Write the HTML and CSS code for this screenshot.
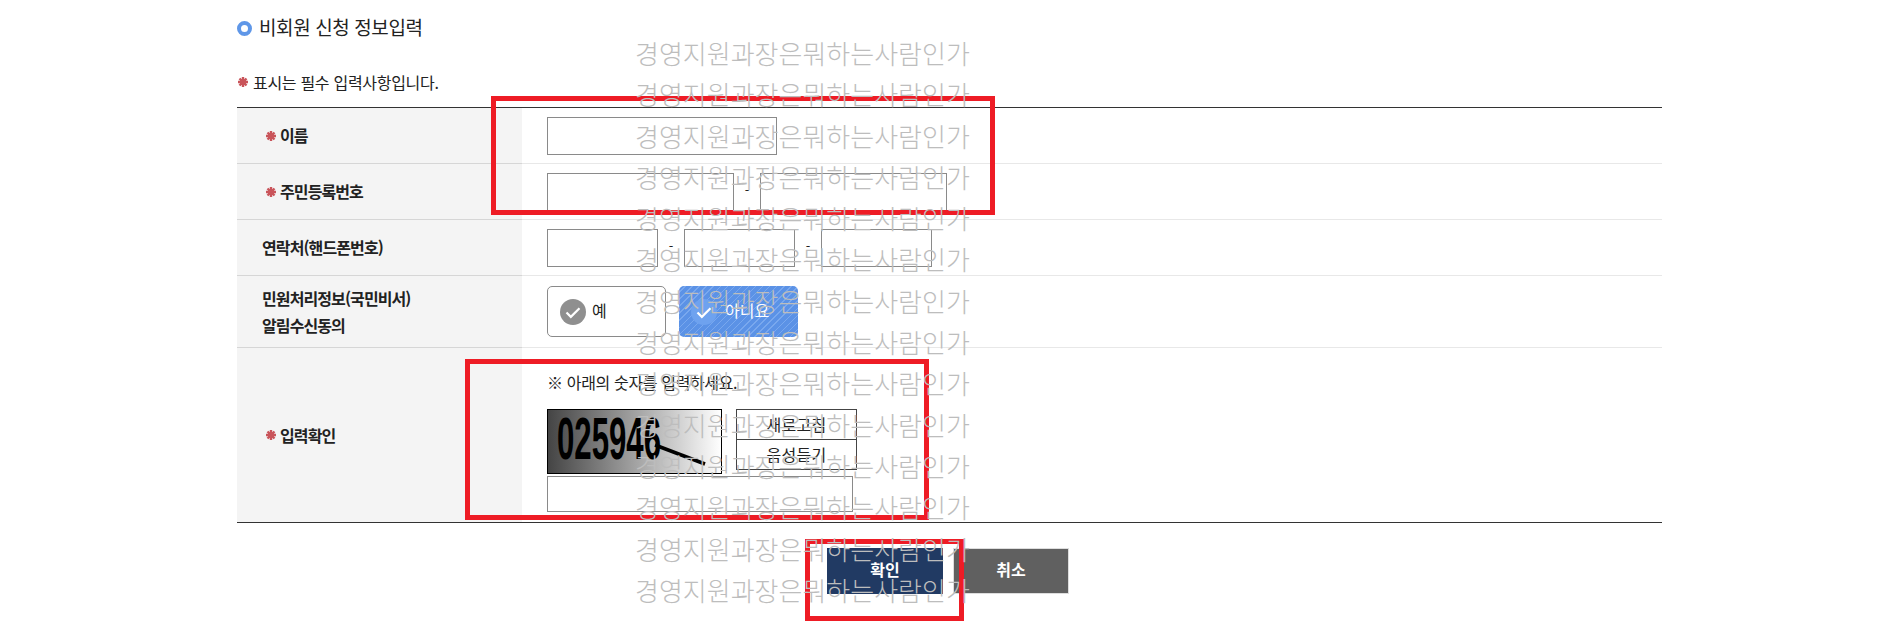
FILE: index.html
```html
<!DOCTYPE html>
<html lang="ko">
<head>
  <meta charset="UTF-8">
  <title>비회원 신청 정보입력</title>
  <link rel="stylesheet" href="styles.css">
</head>
<body>
  <div class="content">
    <h2 class="title"><span class="bullet"></span>비회원 신청 정보입력</h2>
    <p class="note"><svg class="star" viewBox="0 0 10 10"><path d="M5 0v10M0 5h10M1.5 1.5l7 7M8.5 1.5l-7 7"/></svg>표시는 필수 입력사항입니다.</p>

    <table class="form">
      <tr>
        <th><span class="req"><svg class="star" viewBox="0 0 10 10"><path d="M5 0v10M0 5h10M1.5 1.5l7 7M8.5 1.5l-7 7"/></svg>이름</span></th>
        <td><input class="in-name" type="text"></td>
      </tr>
      <tr>
        <th><span class="req"><svg class="star" viewBox="0 0 10 10"><path d="M5 0v10M0 5h10M1.5 1.5l7 7M8.5 1.5l-7 7"/></svg>주민등록번호</span></th>
        <td>
          <div class="fields">
            <input class="in-jumin" type="text"><span class="dash">-</span><input class="in-jumin" type="text">
          </div>
        </td>
      </tr>
      <tr>
        <th>연락처(핸드폰번호)</th>
        <td>
          <div class="fields">
            <input class="in-tel" type="text"><span class="dash">-</span><input class="in-tel" type="text"><span class="dash">-</span><input class="in-tel" type="text">
          </div>
        </td>
      </tr>
      <tr>
        <th>민원처리정보(국민비서)<br>알림수신동의</th>
        <td>
          <div class="choices">
            <div class="choice">
              <span class="tick"><svg viewBox="0 0 24 24"><path d="M6 12.5l4 4 8-8"/></svg></span>예
            </div>
            <div class="choice on">
              <span class="tick"><svg viewBox="0 0 24 24"><path d="M6 12.5l4 4 8-8"/></svg></span>아니요
            </div>
          </div>
        </td>
      </tr>
      <tr>
        <th><span class="req"><svg class="star" viewBox="0 0 10 10"><path d="M5 0v10M0 5h10M1.5 1.5l7 7M8.5 1.5l-7 7"/></svg>입력확인</span></th>
        <td class="captcha-cell">
          <p class="captcha-note">※ 아래의 숫자를 입력하세요.</p>
          <div class="captcha-row">
            <svg class="captcha" viewBox="0 0 175 65">
              <defs>
                <linearGradient id="fade" x1="0" x2="1" y1="0" y2="0">
                  <stop offset="0" stop-color="#444"/>
                  <stop offset="1" stop-color="#fff"/>
                </linearGradient>
              </defs>
              <rect x="0.5" y="0.5" width="174" height="64" fill="url(#fade)" stroke="#000"/>
              <text x="10" y="50" font-family="Liberation Sans" font-weight="700" font-size="60" textLength="104" lengthAdjust="spacingAndGlyphs">025946</text>
              <path d="M108 36L158 55" stroke="#000" stroke-width="3.5"/>
            </svg>
            <div class="captcha-btns">
              <button type="button">새로고침</button>
              <button type="button">음성듣기</button>
            </div>
          </div>
          <input class="in-captcha" type="text">
        </td>
      </tr>
    </table>

    <div class="actions">
      <button class="btn ok" type="button">확인</button>
      <button class="btn cancel" type="button">취소</button>
    </div>
  </div>

  <div class="redbox box1"></div>
  <div class="redbox box2"></div>
  <div class="redbox box3"></div>

  <div class="watermark">
    <div>경영지원과장은뭐하는사람인가</div>
    <div>경영지원과장은뭐하는사람인가</div>
    <div>경영지원과장은뭐하는사람인가</div>
    <div>경영지원과장은뭐하는사람인가</div>
    <div>경영지원과장은뭐하는사람인가</div>
    <div>경영지원과장은뭐하는사람인가</div>
    <div>경영지원과장은뭐하는사람인가</div>
    <div>경영지원과장은뭐하는사람인가</div>
    <div>경영지원과장은뭐하는사람인가</div>
    <div>경영지원과장은뭐하는사람인가</div>
    <div>경영지원과장은뭐하는사람인가</div>
    <div>경영지원과장은뭐하는사람인가</div>
    <div>경영지원과장은뭐하는사람인가</div>
    <div>경영지원과장은뭐하는사람인가</div>
  </div>
</body>
</html>
```

FILE: styles.css
```css
* {
  box-sizing: border-box;
}
html, body {
  height: 637px;
  overflow: hidden;
}
body {
  margin: 0;
  position: relative;
  font-family: "Noto Sans CJK KR", "Noto Sans", sans-serif;
  color: #222;
  background: #fff;
}
.content {
  width: 1425px;
  margin-left: 237px;
}
.title {
  display: flex;
  align-items: center;
  height: 53px;
  margin: 0;
  font-size: 19px;
  font-weight: 400;
  letter-spacing: -0.4px;
}
.bullet {
  width: 15px;
  height: 15px;
  margin-top: 3px;
  margin-right: 7px;
  border: 4px solid #5f97e8;
  border-radius: 50%;
}
.note {
  display: flex;
  align-items: center;
  height: 20px;
  margin: 19px 0 15px;
  font-size: 16px;
  letter-spacing: -0.3px;
}
.note .star {
  margin: 0 5px 0 1px;
}
.star {
  width: 10px;
  height: 10px;
  margin-right: 4px;
  flex: none;
  stroke: #c9545a;
  stroke-width: 2.4;
}
.form {
  width: 100%;
  table-layout: fixed;
  border-spacing: 0;
  border-top: 1px solid #333;
  border-bottom: 1px solid #333;
}
.form th {
  width: 285px;
  padding: 0 0 0 25px;
  background: #f4f4f4;
  border-bottom: 1px solid #d6d6d6;
  font-size: 16px;
  font-weight: 700;
  line-height: 27px;
  letter-spacing: -0.9px;
  text-align: left;
}
.form td {
  height: 56px;
  padding: 9px 0 0 25px;
  vertical-align: top;
  border-bottom: 1px solid #e8e8e8;
}
.form tr:nth-child(4) td {
  height: 72px;
}
.form tr:last-child th,
.form tr:last-child td {
  height: 174px;
  border-bottom: 0;
}
.req {
  display: flex;
  align-items: center;
  padding-left: 4px;
}
input {
  display: block;
  height: 38px;
  margin: 0;
  border: 1px solid #8a8a8a;
  background: #fff;
}
.in-name {
  width: 230px;
}
.in-jumin {
  width: 187px;
}
.in-tel {
  width: 111px;
}
.in-captcha {
  width: 306px;
  height: 36px;
  margin-top: 2px;
}
.fields {
  display: flex;
}
.dash {
  width: 26px;
  padding-top: 7px;
  font-size: 13px;
  text-align: center;
}
.choices {
  display: flex;
  gap: 13px;
  margin-top: 1px;
}
.choice {
  display: flex;
  align-items: center;
  gap: 6px;
  width: 119px;
  height: 51px;
  padding: 0 0 4px 12px;
  border: 1px solid #8a8a8a;
  border-radius: 5px;
  font-size: 16px;
}
.tick {
  display: block;
  width: 26px;
  height: 26px;
  margin-top: 4px;
  border-radius: 50%;
  background: #8f8f8f;
}
.tick svg {
  display: block;
  fill: none;
  stroke: #fff;
  stroke-width: 2;
}
.choice.on {
  gap: 8px;
  border: 0;
  color: #fff;
  background: repeating-linear-gradient(135deg, #5b92e6 0 4px, #79a8ee 4px 5px);
}
.choice.on .tick {
  background: #6ea2ef;
}
.captcha-note {
  margin: 0 0 17px;
  padding-top: 15px;
  font-size: 16px;
  line-height: 20px;
  letter-spacing: -0.35px;
}
.captcha-row {
  display: flex;
  gap: 14px;
}
.captcha {
  display: block;
  width: 175px;
  height: 65px;
}
.captcha-btns button {
  display: block;
  width: 121px;
  height: 31px;
  margin: 0 0 -1px;
  padding: 0 0 2px;
  border: 1px solid #444;
  background: #fff;
  color: #222;
  font: 16px "Noto Sans CJK KR", sans-serif;
  letter-spacing: 0.3px;
}
.actions {
  display: flex;
  justify-content: center;
  gap: 10px;
  margin-top: 25px;
  padding-right: 3px;
}
.btn {
  width: 116px;
  height: 46px;
  padding: 0 0 4px;
  border: 1px solid #ddd;
  color: #fff;
  font: 700 16px "Noto Sans CJK KR", sans-serif;
}
.btn.ok {
  border-color: #213a63;
  background: #213a63;
}
.btn.cancel {
  background: #606060;
}
.redbox {
  position: absolute;
  border: 5px solid #ee1c25;
}
.box1 {
  left: 491px;
  top: 96px;
  width: 504px;
  height: 119px;
}
.box2 {
  left: 465px;
  top: 359px;
  width: 464px;
  height: 161px;
}
.box3 {
  left: 805px;
  top: 539px;
  width: 159px;
  height: 82px;
}
.watermark {
  position: absolute;
  left: 635px;
  top: 32px;
  font-size: 26px;
  font-weight: 300;
  line-height: 41.3px;
  white-space: nowrap;
  color: #bdbdbd;
  pointer-events: none;
}
```
